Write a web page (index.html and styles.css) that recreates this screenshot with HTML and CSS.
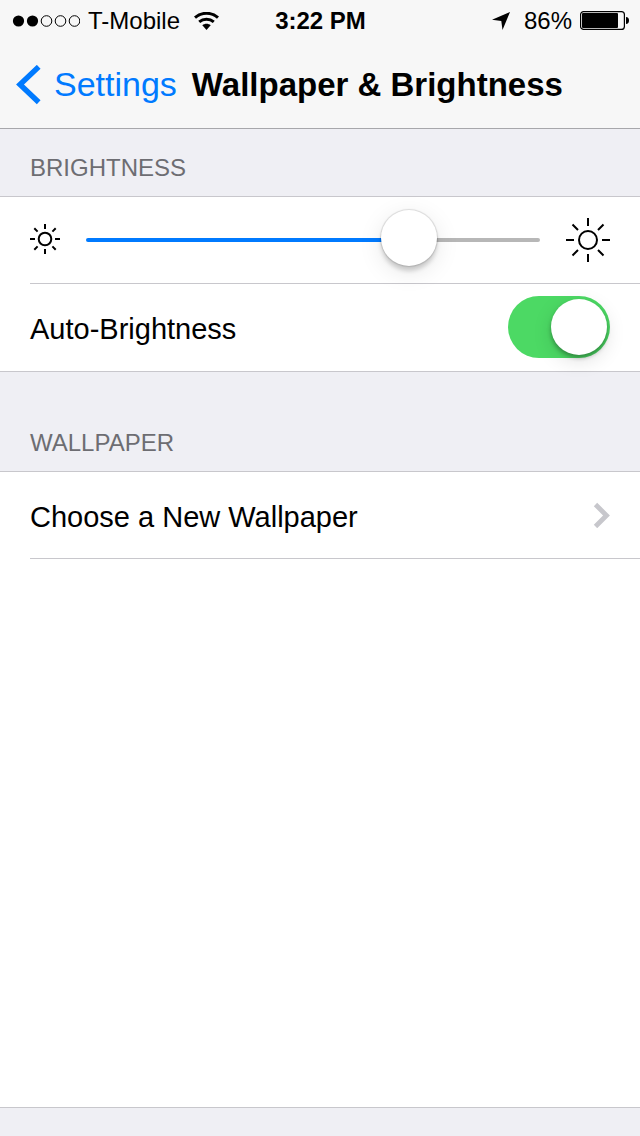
FILE: index.html
```html
<!DOCTYPE html>
<html lang="en">
<head>
<meta charset="utf-8">
<meta name="viewport" content="width=device-width, initial-scale=1">
<title>Wallpaper &amp; Brightness</title>
<link rel="stylesheet" href="styles.css">
</head>
<body>
<header class="top">
  <div class="status">
    <div class="status-left">
      <svg class="signal" width="68" height="12" viewBox="0 0 68 12" role="img" aria-label="Signal: 2 of 5">
        <circle cx="6.500" cy="6" r="5.6"/>
        <circle cx="20.500" cy="6" r="5.6"/>
        <g fill="none" stroke="#000">
          <circle cx="34.500" cy="6" r="5.3"/>
          <circle cx="48.500" cy="6" r="5.3"/>
          <circle cx="62.500" cy="6" r="5.3"/>
        </g>
      </svg>
      <span class="carrier">T-Mobile</span>
      <svg class="wifi" width="25" height="18" viewBox="0 0 25 18" role="img" aria-label="Wi-Fi">
        <g fill="none" stroke="#000" stroke-width="3">
          <path d="M1 5.700C7.500 -.2 17.500 -.2 24 5.700"/>
          <path d="M5.200 9.900C9.400 6.400 15.600 6.400 19.800 9.900"/>
        </g>
        <path d="M12.500 18L8.300 13.300C10.700 11.300 14.300 11.300 16.700 13.300Z"/>
      </svg>
    </div>
    <time class="clock">3:22 PM</time>
    <div class="status-right">
      <svg class="location" width="18" height="18" viewBox="0 0 18 18" role="img" aria-label="Location in use">
        <path d="M18 0L10.500 18L9.300 9L0 7.700Z"/>
      </svg>
      <span class="percent">86%</span>
      <svg class="battery" width="49" height="19" viewBox="0 0 49 19" aria-hidden="true">
        <rect x=".6" y=".6" width="43.800" height="17.800" rx="3" fill="none" stroke="#000" stroke-width="1.200"/>
        <rect x="2" y="2" width="36" height="15" rx="1"/>
        <path d="M46 6C48 6 49 7.500 49 9.500S48 13 46 13Z"/>
      </svg>
    </div>
  </div>
  <nav class="nav">
    <a class="back" href="#settings">
      <svg width="25" height="40" viewBox="0 0 25 40" aria-hidden="true">
        <path d="M22.700 1.800L4 19.500L22.700 37.200" fill="none" stroke="#007aff" stroke-width="5.400"/>
      </svg>
      <span>Settings</span>
    </a>
    <h1 class="title">Wallpaper &amp; Brightness</h1>
  </nav>
</header>
<main class="content">
  <h2 class="heading">BRIGHTNESS</h2>
  <section class="group">
    <div class="row slider-row">
      <svg width="30" height="32" viewBox="0 0 30 32" fill="none" stroke="#000" stroke-width="2" aria-hidden="true">
        <circle cx="15" cy="15" r="6.300"/>
        <path d="M15 0V5M15 25V30M0 15H5M25 15H30M4.300 4.300L7.600 7.600M22.400 22.400L25.700 25.700M4.300 25.700L7.600 22.400M22.400 7.600L25.700 4.300"/>
      </svg>
      <input class="slider" type="range" min="0" max="1000" value="741" aria-label="Brightness">
      <svg width="44" height="44" viewBox="0 0 44 44" fill="none" stroke="#000" stroke-width="2" aria-hidden="true">
        <circle cx="22" cy="22" r="9"/>
        <path d="M22 0V8M22 36V44M0 22H8M36 22H44M6.500 6.500L12 12M32 32L37.500 37.500M6.500 37.500L12 32M32 12L37.500 6.500"/>
      </svg>
    </div>
    <div class="row divided">
      <label class="label" for="auto">Auto-Brightness</label>
      <input class="switch" id="auto" type="checkbox" role="switch" checked>
    </div>
  </section>
  <h2 class="heading spaced">WALLPAPER</h2>
  <section class="group last">
    <a class="row" href="#choose">
      <span class="label">Choose a New Wallpaper</span>
      <svg width="17" height="26" viewBox="0 0 17 26" aria-hidden="true">
        <path d="M2.500 2.500L13.500 13.500L2.500 24.500" fill="none" stroke="#c7c7cc" stroke-width="4.800"/>
      </svg>
    </a>
    <hr class="divider">
  </section>
</main>
</body>
</html>
```

FILE: styles.css
```css
* {
  box-sizing: border-box;
}

body {
  display: flex;
  flex-direction: column;
  min-height: 100vh;
  margin: 0;
  background: #efeff4;
  color: #000;
  font-family: "Liberation Sans", Arial, sans-serif;
  font-size: 29px;
}

svg {
  flex: none;
}

a {
  color: inherit;
  text-decoration: none;
}

.top {
  background: #f7f7f7;
  border-bottom: 1px solid #a7a7ab;
}

.status {
  display: grid;
  grid-template-columns: 1fr auto 1fr;
  align-items: center;
  height: 41px;
  padding: 0 11px 0 12px;
  font-size: 24px;
}

.status-left,
.status-right {
  display: flex;
  align-items: center;
}

.status-left {
  gap: 8px;
}

.status-right {
  justify-content: flex-end;
  gap: 8px;
}

.wifi {
  margin-left: 6px;
}

.location {
  margin-right: 6px;
}

.clock {
  font-weight: bold;
}

.nav {
  display: flex;
  align-items: center;
  height: 87px;
  padding: 0 16px;
  gap: 15px;
}

.back {
  display: flex;
  align-items: center;
  gap: 13px;
  color: #007aff;
  font-size: 34px;
}

.title {
  margin: 0;
  font-size: 33px;
}

.content {
  display: flex;
  flex: 1;
  flex-direction: column;
  padding-bottom: 28px;
}

.heading {
  margin: 0;
  padding: 25px 30px 15px;
  color: #6d6d72;
  font-size: 24px;
  font-weight: normal;
  line-height: 27px;
}

.spaced {
  padding-top: 57px;
}

.group {
  background: #fff;
  border: solid #c8c7cc;
  border-width: 1px 0;
}

.last {
  flex: 1;
}

.row {
  display: flex;
  align-items: center;
  justify-content: space-between;
  height: 86px;
  padding: 0 30px;
}

.slider-row {
  gap: 26px;
}

.label {
  padding-top: 4px;
}

.divided {
  height: 88px;
  margin-left: 30px;
  padding-bottom: 1px;
  padding-left: 0;
  border-top: 1px solid #c8c7cc;
}

.divider {
  height: 1px;
  margin: 0 0 0 30px;
  border: 0;
  background: #c8c7cc;
}

.slider {
  flex: 1;
  min-width: 0;
  height: 60px;
  margin: 0;
  appearance: none;
  background: none;
}

.slider::-webkit-slider-runnable-track {
  height: 4px;
  border-radius: 2px;
  background: linear-gradient(to right, #007aff 71%, #b7b7b7 71%);
}

.slider::-webkit-slider-thumb {
  width: 56px;
  height: 56px;
  margin-top: -28px;
  appearance: none;
  border-radius: 50%;
  background: #fff;
  box-shadow: 0 0 1px 1px rgba(0, 0, 0, 0.12), 0 5px 4px rgba(0, 0, 0, 0.16), 0 6px 24px rgba(0, 0, 0, 0.1);
}

.switch {
  display: flex;
  justify-content: flex-end;
  width: 102px;
  height: 62px;
  margin: 0;
  padding: 3px;
  appearance: none;
  border-radius: 31px;
  background: #4cd964;
}

.switch::before {
  width: 56px;
  height: 56px;
  border-radius: 50%;
  background: #fff;
  box-shadow: 0 3px 4px rgba(0, 0, 0, 0.3), 0 6px 20px rgba(0, 0, 0, 0.12);
  content: "";
}

.switch:not(:checked) {
  justify-content: flex-start;
  background: #e5e5ea;
}
```
